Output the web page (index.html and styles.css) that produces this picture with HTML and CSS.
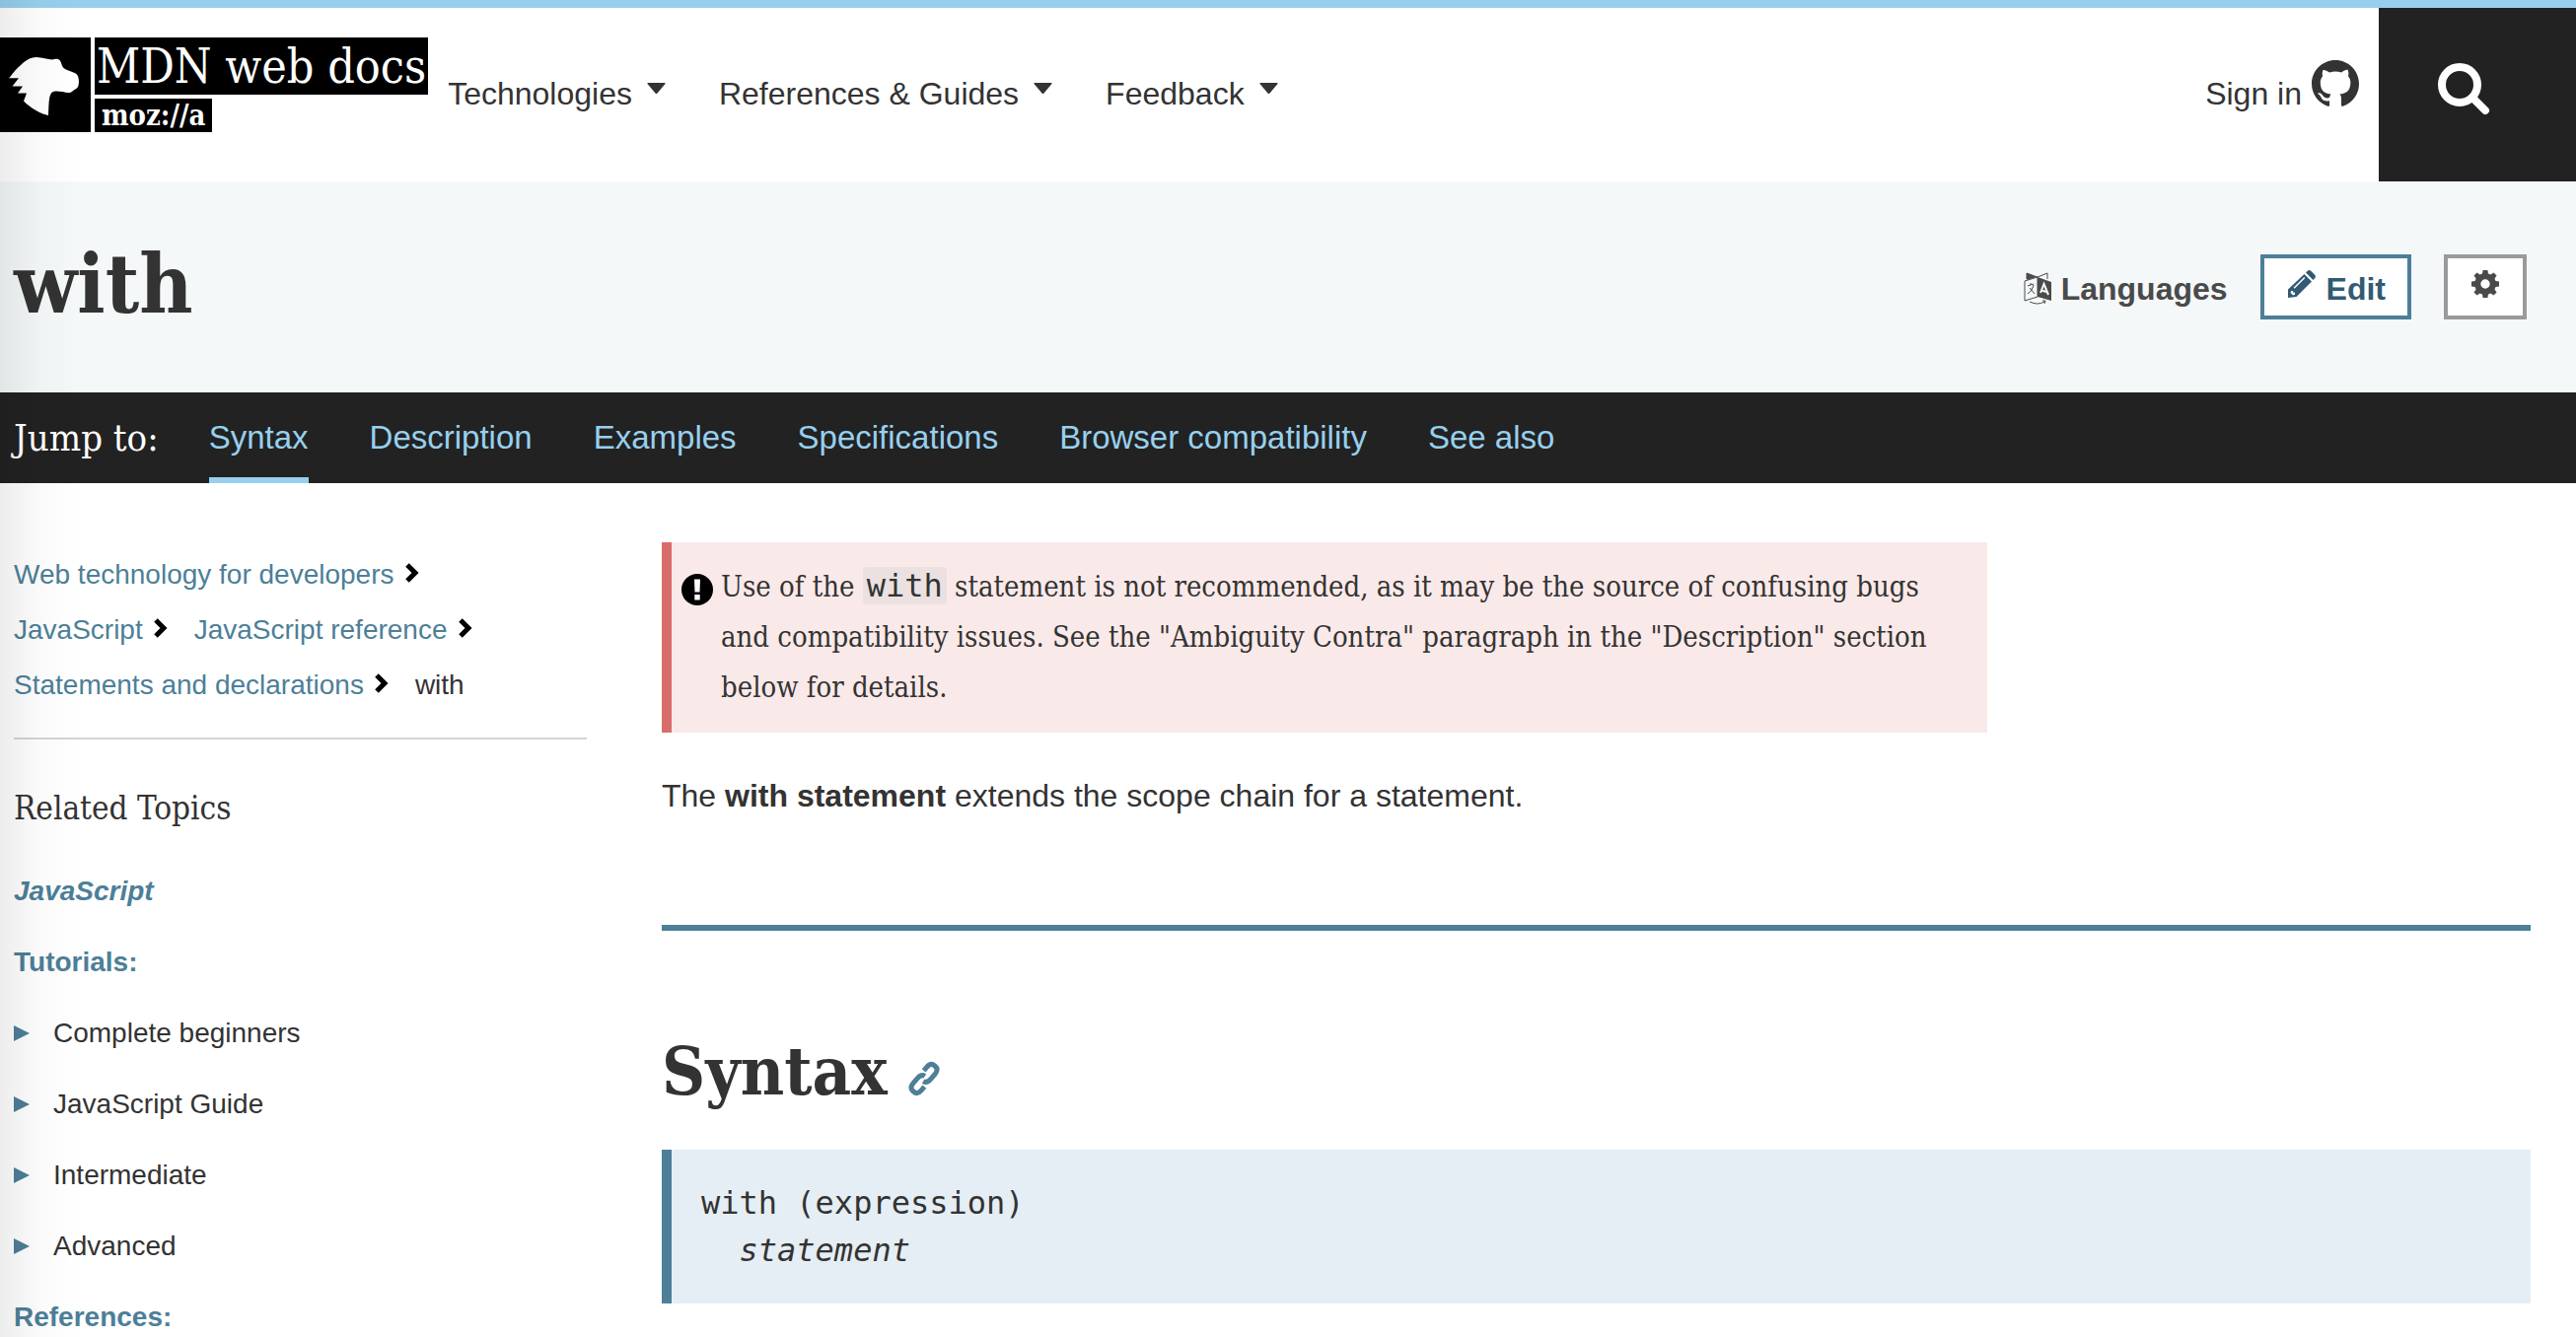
FILE: index.html
```html
<!DOCTYPE html>
<html lang="en">
<head>
<meta charset="utf-8">
<title>with - JavaScript | MDN</title>
<link rel="stylesheet" href="styles.css">
</head>
<body>
<header class="site-header">
  <a class="logo" href="#" aria-label="MDN web docs, mozilla">
    <svg class="logo-mark" viewBox="0 0 92 96" aria-hidden="true"><path d="M9 41.3C13 37 14 34 20 29C25 24 30 20 37 20C43 20 48 22.5 53 22.5C56 21.500 59 21.500 60.500 23C62.500 25 62 28 64 30.500C68 34 75 34.500 78 37.500C80 40 80.500 45 79.500 48.500C79 52 76 52 73.500 54.500C71 57 67 56 63.500 55C59 54.500 55 54 53 55.500C49.500 58 49.500 66 49 79C42 78 30 71 24 64.500L27 56.500H18L23 49.500H12.500L19 41.300Z"/></svg>
    <span class="logo-words">
      <span class="logo-name">MDN web docs</span>
      <span class="logo-moz">moz://a</span>
    </span>
  </a>
  <nav class="main-nav" aria-label="Main">
    <button type="button">Technologies<svg class="caret" viewBox="0 0 19 11" aria-hidden="true"><path d="M1 0H18Q19 0 18.500 1L10.500 10.500Q9.500 11.500 8.500 10.500L.5 1Q0 0 1 0Z"/></svg></button>
    <button type="button">References &amp; Guides<svg class="caret" viewBox="0 0 19 11" aria-hidden="true"><path d="M1 0H18Q19 0 18.500 1L10.500 10.500Q9.500 11.500 8.500 10.500L.5 1Q0 0 1 0Z"/></svg></button>
    <button type="button">Feedback<svg class="caret" viewBox="0 0 19 11" aria-hidden="true"><path d="M1 0H18Q19 0 18.500 1L10.500 10.500Q9.500 11.500 8.500 10.500L.5 1Q0 0 1 0Z"/></svg></button>
  </nav>
  <a class="sign-in" href="#">Sign in
    <svg class="github" viewBox="0 0 16 16" aria-hidden="true"><path d="M8 0C3.580 0 0 3.580 0 8c0 3.540 2.290 6.530 5.470 7.590.4.070.55-.17.55-.38 0-.19-.01-.82-.01-1.490-2.010.37-2.530-.49-2.690-.94-.09-.23-.48-.94-.82-1.130-.28-.15-.68-.52-.01-.53.63-.01 1.080.58 1.230.82.72 1.210 1.870.87 2.330.66.07-.52.28-.87.51-1.070-1.780-.2-3.640-.89-3.640-3.950 0-.87.31-1.590.82-2.150-.08-.2-.36-1.020.08-2.120 0 0 .67-.21 2.200.82.64-.18 1.320-.27 2-.27s1.360.09 2 .27c1.530-1.040 2.200-.82 2.200-.82.44 1.100.16 1.920.08 2.120.51.56.82 1.270.82 2.150 0 3.070-1.870 3.750-3.650 3.950.29.25.54.73.54 1.480 0 1.070-.01 1.930-.01 2.200 0 .21.15.46.55.38A8.010 8.010 0 0 0 16 8c0-4.420-3.580-8-8-8z"/></svg>
  </a>
  <button class="search" type="button" aria-label="Search">
    <svg viewBox="0 0 52 52" aria-hidden="true"><circle cx="22" cy="22" r="18" fill="none" stroke="currentColor" stroke-width="8"/><path d="M35 35L48 48" stroke="currentColor" stroke-width="8" stroke-linecap="round"/></svg>
  </button>
</header>

<div class="title-bar">
  <h1>with</h1>
  <div class="actions">
    <button class="languages" type="button">
      <svg viewBox="0 0 28 32" aria-hidden="true"><path d="M3 6V0L14 4L24 0V6M1 8L14 4V24L1 28Z" fill="none" stroke="currentColor"/><path d="M3 0L13 4L3 7ZM14 4L28 9V28L14 24Z" fill="currentColor"/><path d="M4 13L10 11M7 10V12M10 12Q9 18 4 21M6 15L11 21M6 29Q14 33 21 29M19 28L22 28L21 31" fill="none" stroke="currentColor"/><path d="M17 20L20.500 11L25 22M18 17.500L23 19" fill="none" stroke="#f4f8f9" stroke-width="2"/></svg>
      Languages
    </button>
    <button class="boxed edit" type="button">
      <svg viewBox="0 0 28 28" aria-hidden="true"><path fill="currentColor" fill-rule="evenodd" d="M16.500 4L24 11.500L8.500 27L0 28V19.500ZM18 2.500L20 .6Q21.500 -.7 23 .6L27.400 5Q28.600 6.500 27.400 8L25.500 10ZM3.200 21L2.500 23L5 25.500L7 24.800V22.500H5V21ZM16.300 7L5.500 17.800L6.500 18.800L17.300 8Z"/></svg>
      Edit
    </button>
    <button class="boxed gear" type="button" aria-label="Settings">
      <svg viewBox="0 0 28 28" aria-hidden="true"><path fill="currentColor" fill-rule="evenodd" d="M11.600 0H16.400L17 3.600L19.500 4.600L22.500 2.500L25.600 5.600L23.500 8.500L24.500 11L28 11.600V16.400L24.500 17L23.500 19.500L25.600 22.500L22.500 25.600L19.500 23.500L17 24.500L16.400 28H11.600L11 24.500L8.500 23.500L5.600 25.600L2.500 22.500L4.600 19.500L3.600 17L0 16.400V11.600L3.600 11L4.600 8.500L2.500 5.600L5.600 2.500L8.500 4.600L11 3.600ZM14 9.300A4.700 4.700 0 1 0 14 18.700A4.700 4.700 0 1 0 14 9.300Z"/></svg>
    </button>
  </div>
</div>

<nav class="jump" aria-label="Jump to section">
  <span class="jump-label">Jump to:</span>
  <ul>
    <li><a class="current" href="#syntax">Syntax</a></li>
    <li><a href="#description">Description</a></li>
    <li><a href="#examples">Examples</a></li>
    <li><a href="#specifications">Specifications</a></li>
    <li><a href="#compatibility">Browser compatibility</a></li>
    <li><a href="#see-also">See also</a></li>
  </ul>
</nav>

<div class="layout">
  <aside class="sidebar">
    <nav aria-label="Breadcrumbs">
      <ol class="crumbs">
        <li><a href="#">Web technology for developers</a><svg viewBox="0 0 14 20" aria-hidden="true"><path d="M3 2L11 10L3 18"/></svg></li>
        <li><a href="#">JavaScript</a><svg viewBox="0 0 14 20" aria-hidden="true"><path d="M3 2L11 10L3 18"/></svg></li>
        <li><a href="#">JavaScript reference</a><svg viewBox="0 0 14 20" aria-hidden="true"><path d="M3 2L11 10L3 18"/></svg></li>
        <li><a href="#">Statements and declarations</a><svg viewBox="0 0 14 20" aria-hidden="true"><path d="M3 2L11 10L3 18"/></svg></li>
        <li>with</li>
      </ol>
    </nav>
    <h2 class="related">Related Topics</h2>
    <ul class="topics">
      <li><a class="topic-root" href="#">JavaScript</a></li>
      <li><strong>Tutorials:</strong></li>
      <li><details><summary>Complete beginners</summary></details></li>
      <li><details><summary>JavaScript Guide</summary></details></li>
      <li><details><summary>Intermediate</summary></details></li>
      <li><details><summary>Advanced</summary></details></li>
      <li><strong>References:</strong></li>
    </ul>
  </aside>
  <main>
    <div class="warning">
      <svg viewBox="0 0 32 32" aria-hidden="true"><circle cx="16" cy="16" r="16"/><path fill="#fff" d="M13 5.500H19L18.500 18.500H13.500ZM13.300 21H18.700V26.500H13.300Z"/></svg>
      <p>Use of the <code>with</code> statement is not recommended, as it may be the source of confusing bugs and compatibility issues. See the "Ambiguity Contra" paragraph in the "Description" section below for details.</p>
    </div>
    <p class="intro">The <strong>with statement</strong> extends the scope chain for a statement.</p>
    <section class="section" id="syntax">
      <h2>Syntax <a href="#syntax" aria-label="Link to Syntax"><svg viewBox="0 0 32 32" aria-hidden="true"><g transform="rotate(-50 16 16)" fill="none" stroke="currentColor" stroke-width="5"><path d="M18.500 15Q18 10.500 12 10.500H5Q-1 10.500 -1 16T5 21.500H10"/><path d="M13.500 17Q14 21.500 20 21.500H27Q33 21.500 33 16T27 10.500H22"/></g></svg></a></h2>
      <pre>with (expression)
  <em>statement</em></pre>
    </section>
  </main>
</div>
</body>
</html>
```
FILE: styles.css
```css
* { box-sizing: border-box; }

:root {
  --ink: #333;
  --link: #4d7f98;
  --sky: #97d0ee;
  --dark: #222;
  --slab: "DejaVu Serif Condensed", "DejaVu Serif", serif;
  --sans: "Liberation Sans", Arial, sans-serif;
  --mono: "DejaVu Sans Mono", monospace;
}

body {
  margin: 0;
  border-top: 8px solid var(--sky);
  background: #fff;
  color: var(--ink);
  font: 32px/48px var(--sans);
}

/* soft shade down the left edge of the window */
body::after {
  content: "";
  position: fixed;
  inset: 0 auto 0 0;
  width: 80px;
  background: linear-gradient(90deg, rgba(0, 0, 0, .07), rgba(0, 0, 0, .02) 50%, transparent);
  pointer-events: none;
}

h1, h2, p, ul, ol, pre { margin: 0; }
ul, ol { padding: 0; list-style: none; }
a { color: var(--link); text-decoration: none; }
button { padding: 0; border: 0; background: none; color: inherit; font: inherit; cursor: pointer; }
svg { flex: none; fill: currentColor; overflow: visible; }

.site-header { display: flex; min-height: 176px; }

.logo { display: flex; gap: 4px; align-self: flex-start; margin-top: 30px; color: #fff; }
.logo-mark { width: 92px; height: 96px; background: #000; }
.logo-words { display: flex; flex-direction: column; align-items: flex-start; gap: 4px; font-family: var(--slab); }
.logo-name { padding: 0 2px; background: #000; font-size: 48px; line-height: 58px; }
.logo-moz { padding: 0 7px; background: #000; font-size: 29px; font-weight: bold; line-height: 34px; }

.main-nav { display: flex; gap: 54px; margin-left: 20px; padding-bottom: 3px; }
.main-nav button { display: flex; align-items: center; gap: 15px; }
.caret { width: 19px; height: 11px; margin-bottom: 10px; }

.sign-in { display: flex; align-items: center; gap: 10px; margin-left: auto; padding-bottom: 3px; color: var(--ink); }
.github { width: 48px; height: 48px; margin-bottom: 20px; }
.search { width: 200px; margin-left: 20px; padding-right: 28px; background: var(--dark); color: #fff; }
.search svg { width: 52px; height: 52px; }

.title-bar { display: flex; align-items: center; justify-content: space-between; min-height: 214px; padding: 0 50px 0 14px; background: #f4f8f9; }
h1 { padding-bottom: 6px; font: bold 83px/96px var(--slab); }
.actions { display: flex; align-items: center; gap: 33px; font-weight: bold; }
.languages { display: flex; align-items: center; gap: 10px; padding-top: 3px; color: #4a4a4a; }
.languages svg { width: 28px; height: 32px; }
.boxed { display: flex; align-items: center; height: 66px; padding: 3px 24px 0; border: 4px solid #9a9a9a; background: #fff; color: #4a4a4a; }
.boxed svg { width: 28px; height: 28px; margin-bottom: 10px; }
.edit { gap: 11px; padding-right: 22px; border-color: var(--link); color: #335a74; }

.jump { display: flex; align-items: center; gap: 51px; padding-left: 14px; background: var(--dark); color: #fff; }
.jump-label { font: 38px/92px var(--slab); }
.jump ul { display: flex; gap: 62px; font-size: 33px; line-height: 80px; }
.jump a { display: block; padding: 6px 0 0; border-bottom: 6px solid transparent; color: var(--sky); }
.jump .current { border-color: var(--sky); }

.layout { display: grid; grid-template-columns: 581fr 1895fr; gap: 76px; padding: 60px 46px 0 14px; }

.sidebar { font-size: 28px; line-height: 56px; }
.crumbs { display: flex; flex-wrap: wrap; column-gap: 28px; padding: 5px 60px 25px 0; border-bottom: 2px solid #d4d4d4; }
.crumbs li { display: flex; align-items: center; gap: 10px; }
.crumbs svg { width: 14px; height: 20px; margin-bottom: 4px; fill: none; stroke: #000; stroke-width: 5px; }
.related { margin: 40px 0 18px; font: 33px/60px var(--slab); }
.topics { line-height: 72px; }
.topics strong, .topic-root { color: var(--link); font-weight: bold; }
.topic-root { font-style: italic; }
.topics summary { display: flex; align-items: center; gap: 24px; cursor: pointer; }
.topics summary::before { content: ""; border: solid transparent; border-width: 8px 0 8px 16px; border-left-color: var(--link); }

.warning { display: flex; gap: 8px; max-width: 1344px; padding: 20px 20px 20px 10px; border-left: 10px solid #d86d6a; background: #fae9e9; }
.warning svg { width: 32px; height: 32px; margin-top: 12px; fill: #000; }
.warning p { font: 29px/51px var(--slab); }
code { padding: 0 4px; border-radius: 4px; background: #ebe1e1; font: 32px/32px var(--mono); }
.intro { margin: 40px 0 107px; }

.section { padding-top: 102px; border-top: 6px solid var(--link); }
.section h2 { margin-bottom: 40px; font: bold 68px/80px var(--slab); }
.section h2 svg { width: 32px; height: 32px; }
pre { padding: 30px; border-left: 10px solid var(--link); background: #e5eef4; font: 32px/48px var(--mono); }
```
